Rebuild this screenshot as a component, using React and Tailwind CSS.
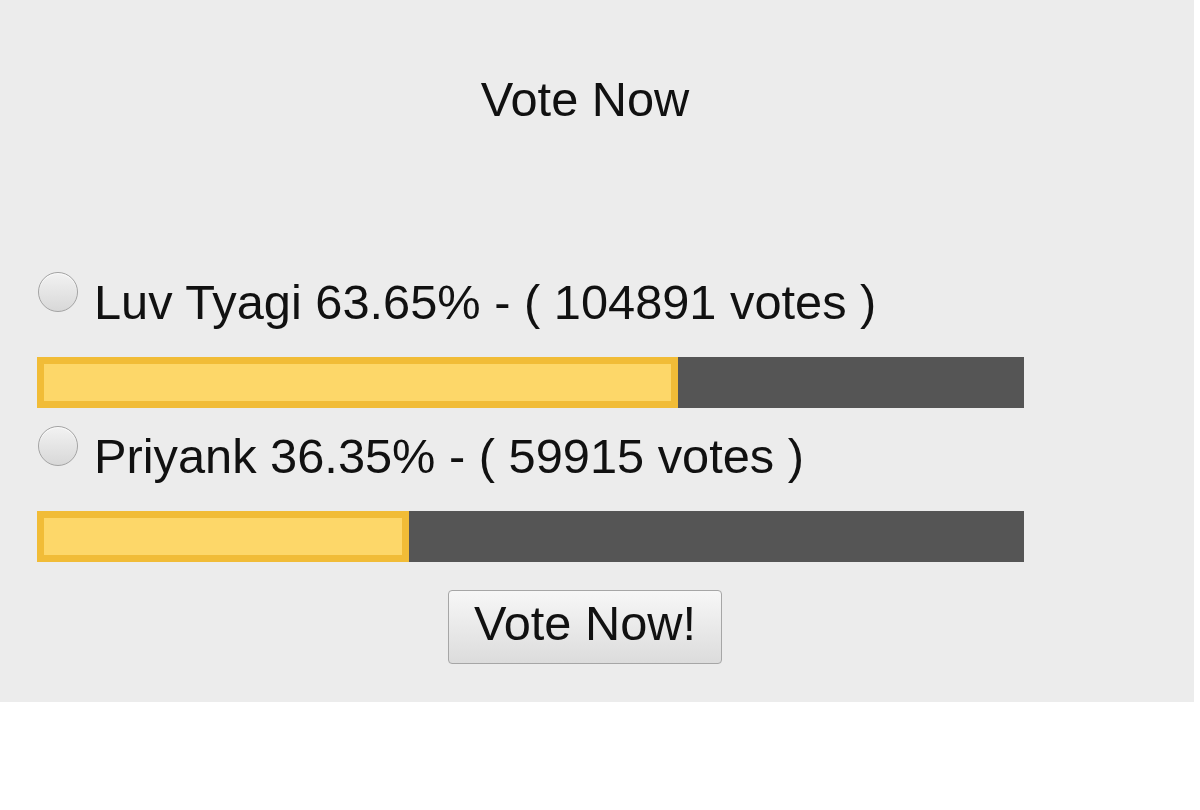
import React, { useState } from 'react';

const candidates = [
    { name: 'Luv Tyagi', pct: 63.65, votes: 104891 },
    { name: 'Priyank', pct: 36.35, votes: 59915 },
];

const Bar = ({ pct }) => (
    <div className="mt-[27px] h-[51px] w-[987px] bg-[#555555]">
        <div
            className="box-content h-[37px] border-[7px] border-[#f1bc37] bg-[#fdd769]"
            style={{ width: `calc(${pct}% - 1px)` }}
        />
    </div>
);

export default function App() {
    const [selected, setSelected] = useState(null);

    return (
        <div className="w-[1194px] h-[702px] bg-[#ececec] font-['Liberation_Sans',Arial,sans-serif] text-[#111]">
            <div className="w-[1170px]">
                <h1 className="pt-[71px] text-center text-[48.75px] leading-[56px] font-normal">Vote Now</h1>

                <div className="pl-[37px] pt-[147px]">
                    {candidates.map((c, i) => (
                        <div key={c.name} className={i > 0 ? 'mt-[20px]' : ''}>
                            <label className="flex items-start gap-[16px] cursor-pointer">
                                <span
                                    onClick={() => setSelected(i)}
                                    className="mt-[-2px] ml-px h-[40px] w-[40px] shrink-0 rounded-full border border-[#a3a3a3] bg-gradient-to-b from-[#f2f2f2] to-[#d8d8d8] shadow-[inset_0_1px_1px_rgba(255,255,255,0.8)] flex items-center justify-center"
                                >
                                    {selected === i && <span className="h-[16px] w-[16px] rounded-full bg-[#333]" />}
                                </span>
                                <span className="text-[48.75px] leading-[56px]">
                                    {c.name} {c.pct.toFixed(2)}% - ( {c.votes} votes )
                                </span>
                            </label>
                            <Bar pct={c.pct} />
                        </div>
                    ))}
                </div>

                <div className="mt-[28px] flex justify-center">
                    <button className="h-[74px] w-[274px] pb-[9px] rounded-[4px] border border-[#a6a6a6] bg-gradient-to-b from-[#f7f7f7] to-[#dcdcdc] text-[48.75px] leading-[56px] text-[#111]">
                        Vote Now!
                    </button>
                </div>
            </div>
        </div>
    );
}
